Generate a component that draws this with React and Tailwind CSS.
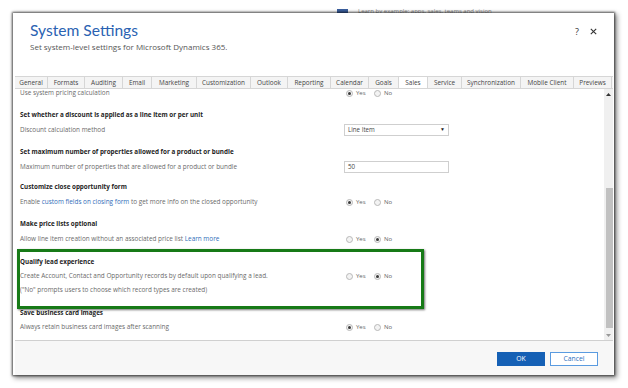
import React from "react";

function Radio({ checked, label }) {
  return (
    <div className="flex items-center gap-[3px] w-[28px]">
      <span className="w-[7px] h-[7px] rounded-full border border-[#b8b8b8] bg-[#f3f3f3] flex items-center justify-center">
        {checked && <span className="w-[3px] h-[3px] rounded-full bg-[#3a3a3a]" />}
      </span>
      <span className="text-[6px] text-[#666] leading-none">{label}</span>
    </div>
  );
}

function YesNo({ yes }) {
  return (
    <div className="flex items-center ml-[2px]">
      <Radio checked={yes} label="Yes" />
      <Radio checked={!yes} label="No" />
    </div>
  );
}

function Heading({ children, className = "" }) {
  return (
    <div className={"h-[14px] flex items-center pl-[5px] text-[6.3px] font-bold text-[#1e1e1e] " + className}>
      {children}
    </div>
  );
}

function Row({ children, control, className = "h-[16px]" }) {
  return (
    <div className={"flex items-center " + className}>
      <div className="w-[329px] pl-[5px] text-[6.4px] text-[#6a6a6a] whitespace-nowrap">{children}</div>
      {control}
    </div>
  );
}

const tabs = [
  ["General", 33],
  ["Formats", 37],
  ["Auditing", 38],
  ["Email", 29],
  ["Marketing", 45],
  ["Customization", 54],
  ["Outlook", 37],
  ["Reporting", 43],
  ["Calendar", 38],
  ["Goals", 30],
  ["Sales", 29],
  ["Service", 34],
  ["Synchronization", 59],
  ["Mobile Client", 53],
  ["Previews", 38],
];

export default function App() {
  return (
    <div className="w-[628px] h-[388px] bg-white relative overflow-hidden font-['Open_Sans',sans-serif]">
      {/* window behind the dialog */}
      <div className="absolute top-[7px] left-[337px] flex items-center gap-[10px]">
        <div className="w-[11px] h-[6px] bg-[#3b5f9e]" />
        <div className="text-[6px] text-[#8a8a8a] whitespace-nowrap">Learn by example: apps, sales, teams and vision</div>
      </div>

      <div className="relative ml-[13px] mt-[13px] w-[601px] h-[362px] bg-white flex flex-col pl-[2px] pr-[1px] shadow-[0_0_2px_1px_rgba(0,0,0,0.6),2px_2px_5px_1px_rgba(0,0,0,0.45)]">
        {/* header */}
        <div className="h-[63px] relative">
          <div className="pl-[15px] pt-[5px] text-[15.6px] leading-[24px] text-[#2a62b2] font-['Lato',sans-serif]">System Settings</div>
          <div className="pl-[15px] text-[8px] leading-[10px] text-[#555]">Set system-level settings for Microsoft Dynamics 365.</div>
          <div className="absolute top-[12px] right-[16px] flex items-center gap-[11px] text-[9px] text-[#333]">
            <span>?</span>
            <svg width="7" height="7" viewBox="0 0 7 7">
              <path d="M0.8 0.8L6.2 6.2M6.2 0.8L0.8 6.2" stroke="#333" strokeWidth="1.1" />
            </svg>
          </div>
        </div>

        {/* tabs */}
        <div className="h-[13px] flex border-t border-b border-[#d6d6d6] bg-[#f4f4f4]">
          {tabs.map(([t, w]) => (
            <div
              key={t}
              style={{ width: w }}
              className={
                "h-full flex items-center justify-center text-[6.4px] text-[#444] whitespace-nowrap border-r border-[#d6d6d6] " +
                (t === "Sales" ? "bg-white" : "")
              }
            >
              {t}
            </div>
          ))}
        </div>

        {/* content */}
        <div className="h-[251px] flex">
          <div className="flex-1 overflow-hidden">
            <Row className="h-[14px] mt-[-3px]" control={<YesNo yes={true} />}>Use system pricing calculation</Row>

            <Heading className="mt-[8px]">Set whether a discount is applied as a line item or per unit</Heading>
            <Row
              control={
                <div className="w-[105px] h-[12px] border border-[#cfcfcf] flex items-center justify-between px-[3px] text-[6.2px] text-[#444]">
                  <span>Line Item</span>
                  <span className="text-[5px] text-[#222]">▼</span>
                </div>
              }
            >
              Discount calculation method
            </Row>

            <Heading className="mt-[7px]">Set maximum number of properties allowed for a product or bundle</Heading>
            <Row
              control={
                <div className="w-[105px] h-[12px] border border-[#cfcfcf] flex items-center px-[3px] text-[6.2px] text-[#444]">
                  50
                </div>
              }
            >
              Maximum number of properties that are allowed for a product or bundle
            </Row>

            <Heading className="mt-[5px]">Customize close opportunity form</Heading>
            <Row control={<YesNo yes={true} />}>
              Enable <span className="text-[#2f6db8]">custom fields on closing form</span> to get more info on the closed opportunity
            </Row>

            <Heading className="mt-[7px]">Make price lists optional</Heading>
            <Row control={<YesNo yes={false} />}>
              Allow line item creation without an associated price list <span className="text-[#2f6db8]">Learn more</span>
            </Row>

            <Heading className="mt-[8px]">Qualify lead experience</Heading>
            <Row className="h-[14px]" control={<YesNo yes={false} />}>
              Create Account, Contact and Opportunity records by default upon qualifying a lead.
            </Row>
            <Row className="h-[14px]">("No" prompts users to choose which record types are created)</Row>

            <Heading className="mt-[9px] h-[12px]">Save business card images</Heading>
            <Row className="h-[14px]" control={<YesNo yes={true} />}>
              Always retain business card images after scanning
            </Row>
          </div>

          {/* scrollbar */}
          <div className="w-[9px] bg-[#f0f0f0] flex flex-col">
            <div className="h-[10px] flex items-center justify-center">
              <svg width="5" height="3" viewBox="0 0 5 3"><path d="M0 3L2.5 0L5 3Z" fill="#333" /></svg>
            </div>
            <div className="h-[89px]" />
            <div className="h-[140px] bg-[#c1c1c1] ml-[2px]" />
            <div className="flex-1" />
            <div className="h-[10px] flex items-center justify-center">
              <svg width="5" height="3" viewBox="0 0 5 3"><path d="M0 0L2.5 3L5 0Z" fill="#999" /></svg>
            </div>
          </div>
        </div>

        {/* footer */}
        <div className="h-[35px] border-t border-[#d0d0d0] bg-[#f7f7f7] flex items-center justify-end gap-[5px] pr-[15px] pt-[2px]">
          <div className="w-[48px] h-[14px] bg-[#1560b5] text-white text-[6.8px] flex items-center justify-center">OK</div>
          <div className="w-[48px] h-[14px] bg-white border border-[#5a9be0] text-[#2c6fbd] text-[6.8px] flex items-center justify-center">Cancel</div>
        </div>

        {/* green highlight */}
        <div className="absolute left-[4px] top-[236px] w-[407px] h-[60px] border-[3px] border-[#177a17] shadow-[1px_1px_2px_rgba(0,0,0,0.55)]" />
      </div>
    </div>
  );
}
